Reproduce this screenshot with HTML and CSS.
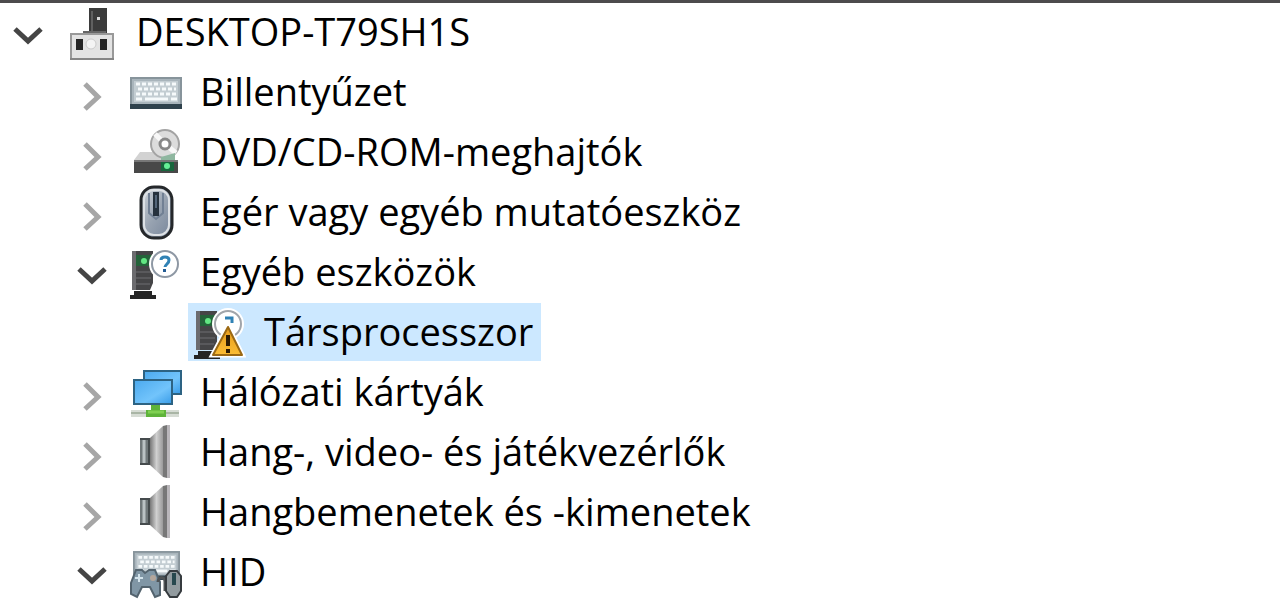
FILE: index.html
```html
<!DOCTYPE html>
<html lang="hu">
<head>
    <meta charset="UTF-8">
    <meta name="viewport" content="width=device-width, initial-scale=1.0">
    <title>Eszközkezelő</title>
    <link rel="stylesheet" href="styles.css">
</head>
<body>
    <!-- shared icons -->
    <svg class="defs" aria-hidden="true">
        <defs>
            <linearGradient id="metal" x1="0" y1="0" x2="1" y2="0">
                <stop offset="0" stop-color="#777"/>
                <stop offset="0.5" stop-color="#d0d0d0"/>
                <stop offset="1" stop-color="#9a9a9a"/>
            </linearGradient>
            <linearGradient id="screen" x1="0" y1="0" x2="1" y2="1">
                <stop offset="0" stop-color="#4ba9ee"/>
                <stop offset="0.6" stop-color="#72c4fb"/>
                <stop offset="1" stop-color="#379be8"/>
            </linearGradient>
            <linearGradient id="shell" x1="0" y1="0" x2="1" y2="1">
                <stop offset="0" stop-color="#d4d9de"/>
                <stop offset="0.5" stop-color="#98a3b1"/>
                <stop offset="1" stop-color="#76859a"/>
            </linearGradient>
            <linearGradient id="warn" x1="0" y1="0" x2="0" y2="1">
                <stop offset="0" stop-color="#e59a1c"/>
                <stop offset="1" stop-color="#fbbd35"/>
            </linearGradient>
        </defs>
        <symbol id="open" viewBox="0 0 56 60">
            <path d="M15 26 L28 38 L41 26" fill="none" stroke="#454545" stroke-width="5"/>
        </symbol>
        <symbol id="closed" viewBox="0 0 56 60">
            <path d="M21 21 L34 34 L21 46" fill="none" stroke="#a6a6a6" stroke-width="5"/>
        </symbol>
        <symbol id="keys" viewBox="0 0 52 32">
            <rect x="1" y="1" width="50" height="30" fill="#a9b5bc" stroke="#87949b" stroke-width="2"/>
            <rect x="4" y="4" width="44" height="21" fill="#c3cdd2"/>
            <path d="M6 7h40M8 12h38M6 17h40" stroke="#f6fafb" stroke-width="3" stroke-dasharray="4 2"/>
            <path d="M6 22h6M15 22h23M41 22h6" stroke="#f6fafb" stroke-width="3"/>
            <rect y="27" width="52" height="5" fill="#2f424d"/>
        </symbol>
        <symbol id="tower" viewBox="0 0 52 60">
            <path d="M2 8h21v32l-3 7H2z" fill="#454547"/>
            <path d="M2 8h4v39H2z" fill="#6c6c6f"/>
            <path d="M6 12h16v11H6z" fill="#24633a"/>
            <path d="M6 29h15M6 35h15M6 41h14" stroke="#59595c" stroke-width="2"/>
            <circle cx="14" cy="18" r="3" fill="#62e783"/>
            <path d="M4 48h18v4h4v4H0v-4h4z" fill="#252525"/>
        </symbol>
        <symbol id="speaker" viewBox="0 0 52 60">
            <path d="M20 15 L33 3 V54 L20 42z" fill="url(#metal)"/>
            <path d="M33 3l4-1v53l-4-1z" fill="#777"/>
            <path d="M37 2h3v53h-3z" fill="#b9b6ba"/>
            <path d="M10 15h10v27H10z" fill="#70787a"/>
            <path d="M14 15v27" stroke="#bac2c4" stroke-width="3"/>
            <path d="M10 16h10M10 41h10M19 15v27" stroke="#454b4d" stroke-width="2"/>
        </symbol>
    </svg>

    <ul class="tree" role="tree" aria-label="Eszközök">
        <li role="treeitem" aria-expanded="true">
            <div class="row">
                <button class="toggle" aria-label="Összecsukás"><svg><use href="#open"/></svg></button>
                <div class="item">
                    <svg class="icon" viewBox="0 0 52 60">
                        <path d="M23 5h18v25H23z" fill="#3b3b3b"/>
                        <path d="M26 8v20" stroke="#606060" stroke-width="2"/>
                        <rect x="31" y="14" width="3" height="3" fill="#ddd"/>
                        <path d="M17 28h23v3H17z" fill="#666"/>
                        <rect x="5" y="31" width="42" height="25" fill="#e3e3e3" stroke="#999" stroke-width="2"/>
                        <path d="M4 56h44" stroke="#858585" stroke-width="2"/>
                        <path d="M10 36h7v11h-7zM34 36h7v11h-7z" fill="#252525"/>
                        <circle cx="25" cy="41" r="5" fill="#f4f4f4" stroke="#ccc" stroke-width="1"/>
                    </svg>
                    <span class="label">DESKTOP-T79SH1S</span>
                </div>
            </div>
            <ul role="group">
                <li role="treeitem" aria-expanded="false">
                    <div class="row">
                        <button class="toggle" aria-label="Kibontás"><svg><use href="#closed"/></svg></button>
                        <div class="item">
                            <svg class="icon" viewBox="0 0 52 60"><use href="#keys" y="14" width="52" height="32"/></svg>
                            <span class="label">Billentyűzet</span>
                        </div>
                    </div>
                </li>
                <li role="treeitem" aria-expanded="false">
                    <div class="row">
                        <button class="toggle" aria-label="Kibontás"><svg><use href="#closed"/></svg></button>
                        <div class="item">
                            <svg class="icon" viewBox="0 0 52 60">
                                <path d="M10 29h14l20 8H4z" fill="#d2d2d2"/>
                                <circle cx="35" cy="21" r="14" fill="#dcdcdc" stroke="#a3a3a3" stroke-width="2"/>
                                <path d="M35 21L25 11M35 21L46 30" stroke="#f8f8f8" stroke-width="5"/>
                                <circle cx="35" cy="21" r="5" fill="#fff" stroke="#888" stroke-width="3"/>
                                <path d="M31 34l14-4v7H31z" fill="#8fb7a0"/>
                                <rect x="4" y="37" width="44" height="13" fill="#484848"/>
                                <path d="M4 38h44" stroke="#777" stroke-width="2"/>
                                <rect x="31" y="39" width="13" height="9" fill="#17663c"/>
                                <circle cx="37" cy="43" r="3" fill="#65f096"/>
                            </svg>
                            <span class="label">DVD/CD-ROM-meghajtók</span>
                        </div>
                    </div>
                </li>
                <li role="treeitem" aria-expanded="false">
                    <div class="row">
                        <button class="toggle" aria-label="Kibontás"><svg><use href="#closed"/></svg></button>
                        <div class="item">
                            <svg class="icon" viewBox="0 0 52 60">
                                <rect x="11" y="4" width="31" height="51" rx="13" fill="url(#shell)" stroke="#25282b" stroke-width="3"/>
                                <rect x="14" y="7" width="25" height="45" rx="10" fill="none" stroke="#dde1e5" stroke-width="2"/>
                                <path d="M19 10v20l7 6 7-6V10" fill="none" stroke="#718094" stroke-width="2"/>
                                <path d="M23 9h6v24h-6z" fill="#25313d"/>
                                <path d="M26 12v13" stroke="#536579" stroke-width="2"/>
                            </svg>
                            <span class="label">Egér vagy egyéb mutatóeszköz</span>
                        </div>
                    </div>
                </li>
                <li role="treeitem" aria-expanded="true">
                    <div class="row">
                        <button class="toggle" aria-label="Összecsukás"><svg><use href="#open"/></svg></button>
                        <div class="item">
                            <svg class="icon" viewBox="0 0 52 60">
                                <use href="#tower" width="52" height="60"/>
                                <circle cx="35" cy="21" r="16" fill="#fff"/>
                                <circle cx="35" cy="21" r="13" fill="#fff" stroke="#8e98a4" stroke-width="2"/>
                                <path d="M31 17q0-3 4-3t4 3q0 2-2 4t-2 3" fill="none" stroke="#3082b5" stroke-width="3"/>
                                <rect x="33" y="26" width="3" height="3" fill="#245c94"/>
                            </svg>
                            <span class="label">Egyéb eszközök</span>
                        </div>
                    </div>
                    <ul role="group">
                        <li role="treeitem" aria-selected="true">
                            <div class="row">
                                <span class="toggle"></span>
                                <div class="item selected">
                                    <svg class="icon" viewBox="0 0 52 60">
                                        <use href="#tower" width="52" height="60"/>
                                        <circle cx="34" cy="21" r="16" fill="#fff"/>
                                        <circle cx="34" cy="21" r="13" fill="#fff" stroke="#a1a5aa" stroke-width="2"/>
                                        <path d="M31 15h7v5" fill="none" stroke="#3082b5" stroke-width="3"/>
                                        <path d="M34 21L50 53H17z" fill="#fff" stroke="#fff" stroke-width="3"/>
                                        <path d="M34 24L48 52H19z" fill="url(#warn)" stroke="#9b6914" stroke-width="2" stroke-linejoin="round"/>
                                        <path d="M34 32v11M34 46v4" stroke="#2c1b04" stroke-width="4"/>
                                    </svg>
                                    <span class="label">Társprocesszor</span>
                                </div>
                            </div>
                        </li>
                    </ul>
                </li>
                <li role="treeitem" aria-expanded="false">
                    <div class="row">
                        <button class="toggle" aria-label="Kibontás"><svg><use href="#closed"/></svg></button>
                        <div class="item">
                            <svg class="icon" viewBox="0 0 52 60">
                                <rect x="14" y="8" width="37" height="23" fill="url(#screen)" stroke="#2d6383" stroke-width="2"/>
                                <rect x="4" y="17" width="38" height="24" fill="url(#screen)" stroke="#2d6383" stroke-width="2"/>
                                <path d="M1 47h48v7H1z" fill="#d6dcd4"/>
                                <path d="M1 50h48" stroke="#a9b5a5" stroke-width="2"/>
                                <path d="M21 42h9v5h6v7H16v-7h5z" fill="#5eb33a"/>
                                <path d="M18 49h16" stroke="#80d052" stroke-width="3"/>
                            </svg>
                            <span class="label">Hálózati kártyák</span>
                        </div>
                    </div>
                </li>
                <li role="treeitem" aria-expanded="false">
                    <div class="row">
                        <button class="toggle" aria-label="Kibontás"><svg><use href="#closed"/></svg></button>
                        <div class="item">
                            <svg class="icon"><use href="#speaker"/></svg>
                            <span class="label">Hang-, video- és játékvezérlők</span>
                        </div>
                    </div>
                </li>
                <li role="treeitem" aria-expanded="false">
                    <div class="row">
                        <button class="toggle" aria-label="Kibontás"><svg><use href="#closed"/></svg></button>
                        <div class="item">
                            <svg class="icon"><use href="#speaker"/></svg>
                            <span class="label">Hangbemenetek és -kimenetek</span>
                        </div>
                    </div>
                </li>
                <li role="treeitem" aria-expanded="true">
                    <div class="row">
                        <button class="toggle" aria-label="Összecsukás"><svg><use href="#open"/></svg></button>
                        <div class="item">
                            <svg class="icon" viewBox="0 0 52 60">
                                <use href="#keys" x="3" y="8" width="47" height="29"/>
                                <path d="M6 27h6l3 3 4-3h6l5 12v13l-5 2-5-10h-8l-5 10-6-3V40z" fill="#8096a5" stroke="#53636e" stroke-width="2"/>
                                <path d="M9 31v8M5 35h8" stroke="#d3e3eb" stroke-width="2"/>
                                <circle cx="23" cy="35" r="3" fill="#b4a69b"/>
                                <path d="M28 39c0-6 7-6 7 0v9" fill="none" stroke="#4f5355" stroke-width="3"/>
                                <path d="M40 28h7l4 5v15l-4 6h-7l-4-6V33z" fill="#929b9f" stroke="#363b3f" stroke-width="2"/>
                                <path d="M44 30v12" stroke="#27484e" stroke-width="4"/>
                            </svg>
                            <span class="label">HID</span>
                        </div>
                    </div>
                </li>
            </ul>
        </li>
    </ul>
</body>
</html>
```

FILE: styles.css
```css
body {
    margin: 0;
    border-top: 3px solid #4d4b4d;
    background-color: #fff;
    color: #000;
    font-family: "Open Sans", "Noto Sans", sans-serif;
    font-size: 38px;
}

ul {
    list-style: none;
    margin: 0;
    padding: 0;
}

ul ul {
    padding-left: 64px;
}

.defs {
    display: block;
    width: 0;
    height: 0;
}

.row {
    display: flex;
    height: 60px;
}

.toggle {
    flex: none;
    width: 56px;
    padding: 0;
    border: none;
    background: none;
}

.toggle svg {
    display: block;
    width: 56px;
    height: 60px;
}

.item {
    display: flex;
    gap: 18px;
    height: 58px;
    margin-left: 4px;
    padding: 0 8px 0 6px;
}

.selected {
    background-color: #cce8ff;
}

.icon {
    flex: none;
    width: 52px;
    height: 60px;
}

.label {
    line-height: 56px;
    white-space: nowrap;
}
```
